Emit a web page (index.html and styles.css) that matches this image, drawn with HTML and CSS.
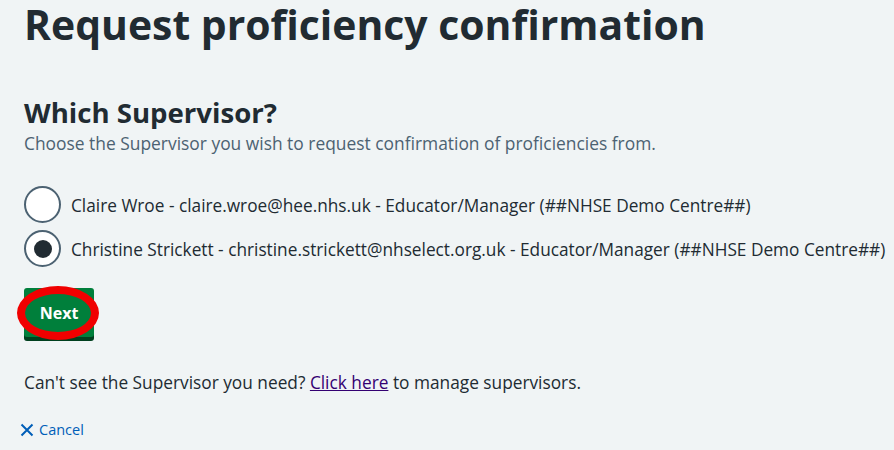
FILE: index.html
```html
<!DOCTYPE html>
<html lang="en">
<head>
<meta charset="utf-8">
<title>Request proficiency confirmation</title>
<link rel="stylesheet" href="styles.css">
</head>
<body>
<main class="page">
  <h1 class="title">Request proficiency confirmation</h1>
  <fieldset class="fieldset">
    <legend class="legend">Which Supervisor?</legend>
    <div class="hint">Choose the Supervisor you wish to request confirmation of proficiencies from.</div>
    <div class="radios">
      <label class="radio">
        <input class="radio-input" type="radio" name="supervisor">
        <span class="radio-label">Claire Wroe - claire.wroe@hee.nhs.uk - Educator/Manager (##NHSE Demo Centre##)</span>
      </label>
      <label class="radio">
        <input class="radio-input" type="radio" name="supervisor" checked>
        <span class="radio-label">Christine Strickett - christine.strickett@nhselect.org.uk - Educator/Manager (##NHSE Demo Centre##)</span>
      </label>
    </div>
  </fieldset>
  <div class="actions">
    <button class="button" type="submit">Next</button>
    <span class="highlight" aria-hidden="true"></span>
  </div>
  <p class="body-text">Can't see the Supervisor you need? <a class="link" href="#">Click here</a> to manage supervisors.</p>
  <a class="cancel" href="#">
    <svg class="cancel-icon" viewBox="0 0 14 14" width="14" height="14" aria-hidden="true"><path d="M1.5 1.5 L12.5 12.5 M12.5 1.5 L1.5 12.5" stroke="#005eb8" stroke-width="2" fill="none" stroke-linecap="butt"/></svg>
    <span>Cancel</span>
  </a>
</main>
</body>
</html>
```
FILE: styles.css
```css
html, body {
  margin: 0;
  padding: 0;
  background: #f0f4f5;
}
body {
  font-family: "Open Sans", "Lato", sans-serif;
  color: #212b32;
}
.page {
  padding: 0 24px;
}
.title {
  margin: 0;
  font-size: 40.9px;
  line-height: 48px;
  font-weight: 700;
}
.fieldset {
  border: 0;
  margin: 47px 0 0;
  padding: 0;
  min-width: 0;
}
.legend {
  padding: 0;
  font-size: 27.6px;
  line-height: 34px;
  font-weight: 700;
}
.hint {
  margin-top: 2px;
  font-size: 17.4px;
  line-height: 24px;
  color: #4c6272;
}
.radios {
  margin-top: 31px;
  display: flex;
  flex-direction: column;
  gap: 7px;
}
.radio {
  display: flex;
  align-items: center;
  gap: 10px;
  font-size: 17.25px;
  line-height: 24px;
  white-space: nowrap;
}
.radio-input {
  appearance: none;
  -webkit-appearance: none;
  margin: 0;
  width: 37px;
  height: 37px;
  flex: 0 0 37px;
  border: 2px solid #4c6272;
  border-radius: 50%;
  background: #ffffff;
  box-sizing: border-box;
  position: relative;
}
.radio-input:checked::after {
  content: "";
  position: absolute;
  left: 50%;
  top: 50%;
  width: 18px;
  height: 18px;
  margin: -9px 0 0 -9px;
  border-radius: 50%;
  background: #212b32;
}
.radio-label {
  padding-top: 2px;
}
.actions {
  margin-top: 21px;
  position: relative;
  width: 70px;
  height: 53px;
}
.button {
  display: block;
  width: 70px;
  height: 49px;
  border: 0;
  border-radius: 3px;
  background: #007f3b;
  box-shadow: 0 4px 0 #00401e;
  color: #ffffff;
  font-family: inherit;
  font-size: 16px;
  font-weight: 700;
  padding: 0;
}
.highlight {
  position: absolute;
  left: -7px;
  top: -2px;
  width: 82px;
  height: 54px;
  box-sizing: border-box;
  border: 8px solid #f00000;
  border-radius: 50%;
}
.body-text {
  margin: 30px 0 0;
  font-size: 17.3px;
  line-height: 24px;
}
.link {
  color: #330072;
  text-decoration: underline;
}
.cancel {
  display: inline-flex;
  align-items: center;
  gap: 5px;
  margin-top: 25px;
  margin-left: -4px;
  color: #005eb8;
  text-decoration: none;
  font-size: 14.5px;
  line-height: 20px;
}
```
